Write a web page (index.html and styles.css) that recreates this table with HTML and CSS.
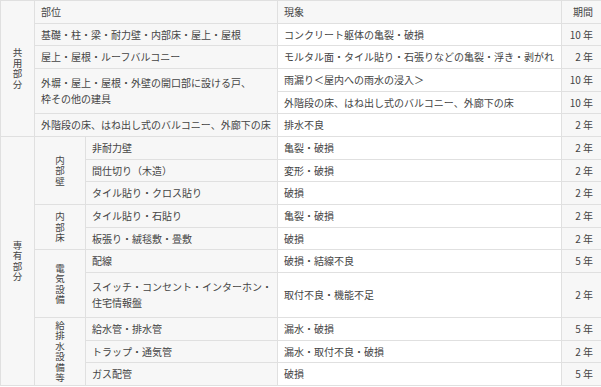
FILE: index.html
```html
<!DOCTYPE html>
<html lang="ja">
<head>
<meta charset="utf-8">
<link rel="stylesheet" href="styles.css">
</head>
<body>
<table class="warranty">
  <colgroup>
    <col class="c-group">
    <col class="c-sub">
    <col class="c-part">
    <col class="c-issue">
    <col class="c-term">
  </colgroup>
  <tbody>
    <tr>
      <td class="label" rowspan="6"><span class="vt">共用部分</span></td>
      <td class="head" colspan="2">部位</td>
      <td class="head">現象</td>
      <td class="head term">期間</td>
    </tr>
    <tr>
      <td class="part" colspan="2">基礎・柱・梁・耐力壁・内部床・屋上・屋根</td>
      <td class="issue">コンクリート躯体の亀裂・破損</td>
      <td class="term">10 年</td>
    </tr>
    <tr>
      <td class="part" colspan="2">屋上・屋根・ルーフバルコニー</td>
      <td class="issue">モルタル面・タイル貼り・石張りなどの亀裂・浮き・剥がれ</td>
      <td class="term">2 年</td>
    </tr>
    <tr>
      <td class="part tall" colspan="2" rowspan="2">外塀・屋上・屋根・外壁の開口部に設ける戸、<br>枠その他の建具</td>
      <td class="issue">雨漏り＜屋内への雨水の浸入＞</td>
      <td class="term">10 年</td>
    </tr>
    <tr>
      <td class="issue">外階段の床、はね出し式のバルコニー、外廊下の床</td>
      <td class="term">10 年</td>
    </tr>
    <tr>
      <td class="part" colspan="2">外階段の床、はね出し式のバルコニー、外廊下の床</td>
      <td class="issue">排水不良</td>
      <td class="term">2 年</td>
    </tr>
    <tr>
      <td class="label" rowspan="10"><span class="vt">専有部分</span></td>
      <td class="label" rowspan="3"><span class="vt">内部壁</span></td>
      <td class="part">非耐力壁</td>
      <td class="issue">亀裂・破損</td>
      <td class="term">2 年</td>
    </tr>
    <tr>
      <td class="part">間仕切り（木造）</td>
      <td class="issue">変形・破損</td>
      <td class="term">2 年</td>
    </tr>
    <tr>
      <td class="part">タイル貼り・クロス貼り</td>
      <td class="issue">破損</td>
      <td class="term">2 年</td>
    </tr>
    <tr>
      <td class="label" rowspan="2"><span class="vt">内部床</span></td>
      <td class="part">タイル貼り・石貼り</td>
      <td class="issue">亀裂・破損</td>
      <td class="term">2 年</td>
    </tr>
    <tr>
      <td class="part">板張り・絨毯敷・畳敷</td>
      <td class="issue">破損</td>
      <td class="term">2 年</td>
    </tr>
    <tr>
      <td class="label" rowspan="2"><span class="vt">電気設備</span></td>
      <td class="part">配線</td>
      <td class="issue">破損・結線不良</td>
      <td class="term">5 年</td>
    </tr>
    <tr>
      <td class="part double">スイッチ・コンセント・インターホン・<br>住宅情報盤</td>
      <td class="issue">取付不良・機能不足</td>
      <td class="term">2 年</td>
    </tr>
    <tr>
      <td class="label" rowspan="3"><span class="vt">給排水設備等</span></td>
      <td class="part">給水管・排水管</td>
      <td class="issue">漏水・破損</td>
      <td class="term">5 年</td>
    </tr>
    <tr>
      <td class="part">トラップ・通気管</td>
      <td class="issue">漏水・取付不良・破損</td>
      <td class="term">2 年</td>
    </tr>
    <tr>
      <td class="part">ガス配管</td>
      <td class="issue">破損</td>
      <td class="term">5 年</td>
    </tr>
  </tbody>
</table>
</body>
</html>
```

FILE: styles.css
```css
html, body {
  margin: 0;
  padding: 0;
  background: #ffffff;
}

body {
  font-family: "Noto Sans CJK JP", "Noto Sans", sans-serif;
  font-size: 10px;
  color: #444444;
}

.warranty {
  width: 601px;
  border-collapse: collapse;
  table-layout: fixed;
}

.c-group { width: 34px; }
.c-sub { width: 51px; }
.c-part { width: 192px; }
.c-issue { width: 284px; }
.c-term { width: 40px; }

.warranty td {
  border: 1px solid #e0e0e0;
  background: #f7f7f7;
  padding: 3px 6px;
  line-height: 15.65px;
  vertical-align: middle;
  white-space: nowrap;
  overflow: hidden;
}

.warranty td.issue {
  background: #ffffff;
}

.warranty td.term {
  text-align: right;
  padding-right: 8px;
}

.warranty td.label {
  padding: 0;
  text-align: center;
}

.warranty td.double {
  padding-top: 6.35px;
  padding-bottom: 6.35px;
}

.vt {
  display: block;
  width: 1em;
  margin: 0 auto;
  font-size: 9.5px;
  line-height: 10.5px;
  white-space: normal;
  word-break: break-all;
}
```
